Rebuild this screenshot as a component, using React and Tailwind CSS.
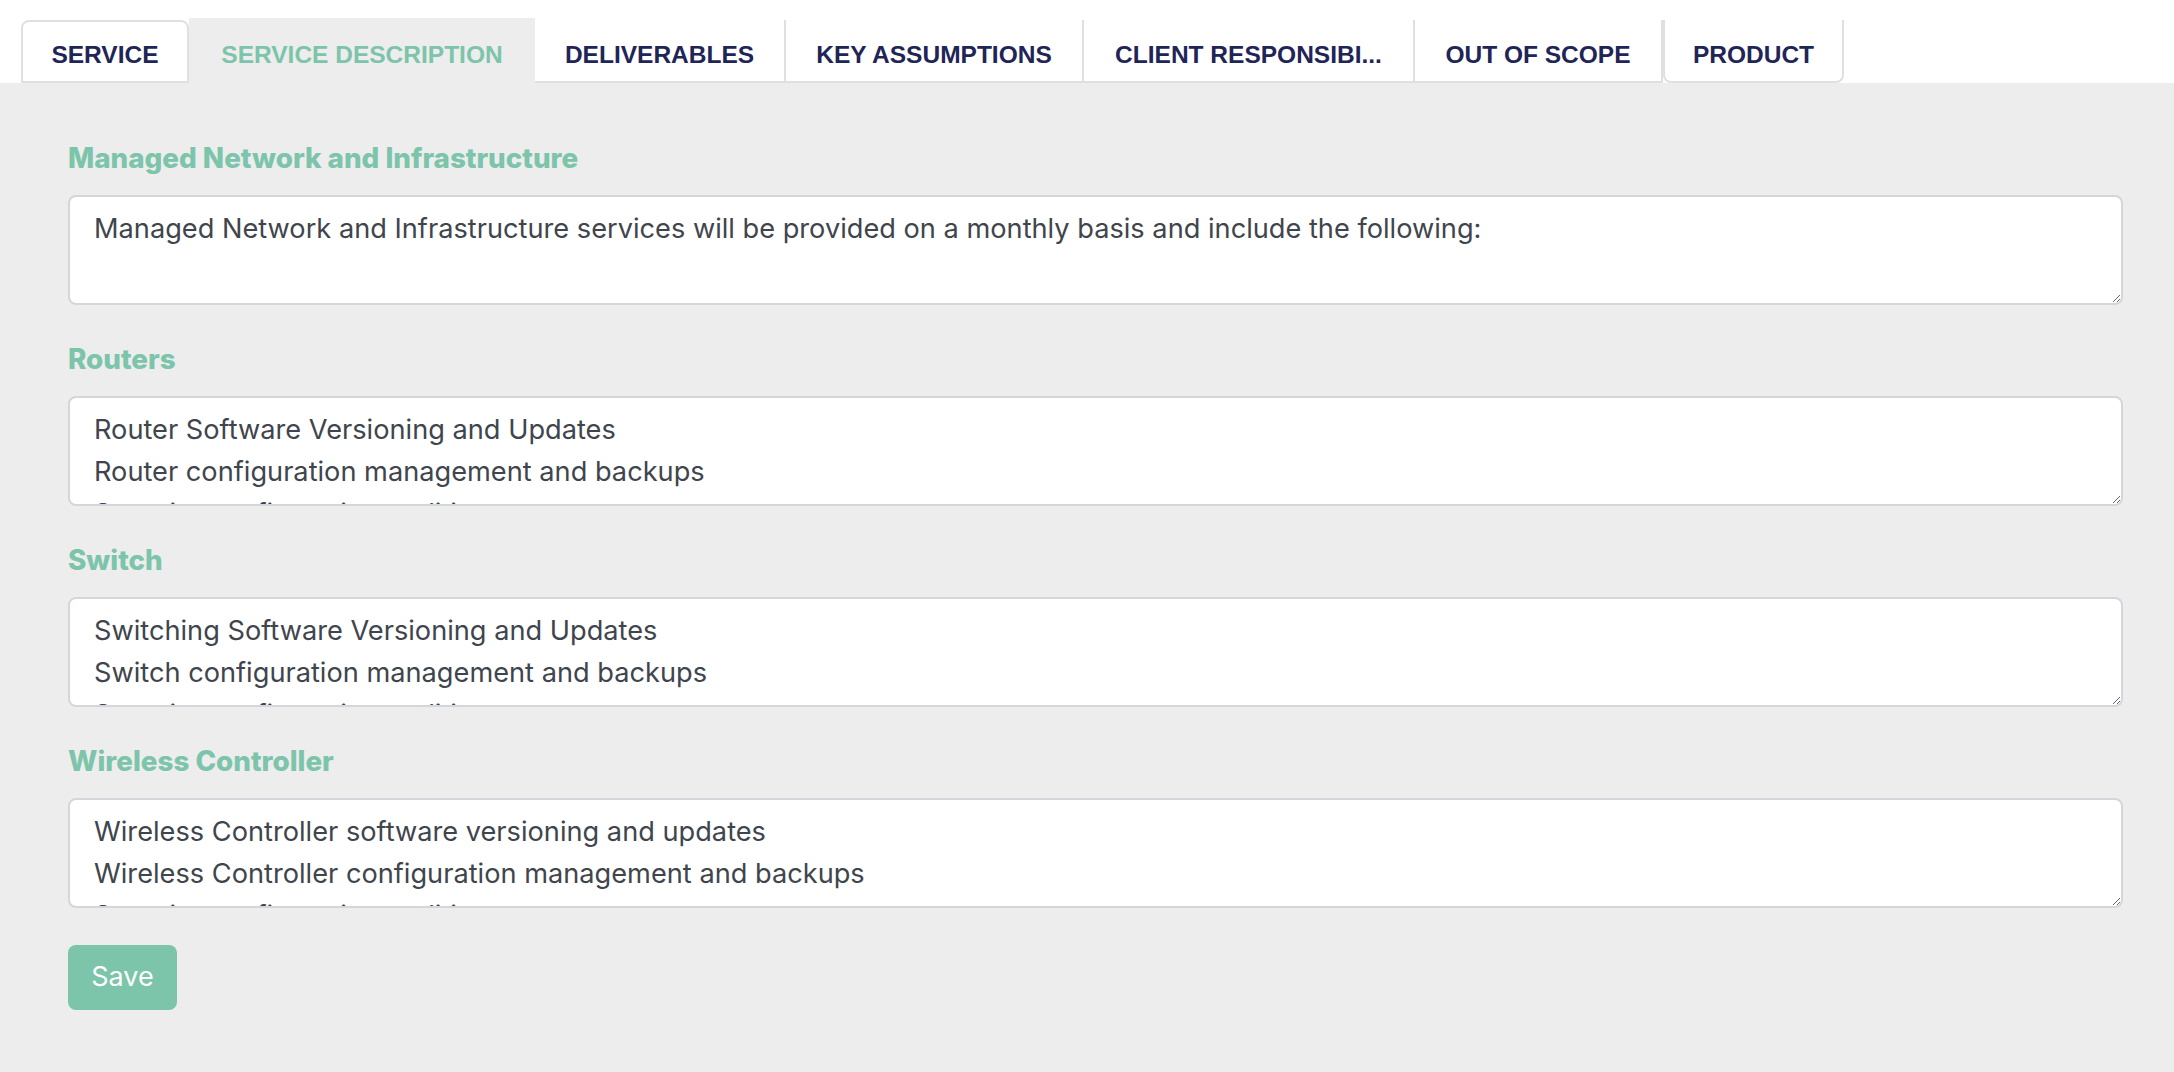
import React from "react";

const tabs = [
  { label: "SERVICE", kind: "first", w: "w-[168px]" },
  { label: "SERVICE DESCRIPTION", kind: "active", w: "w-[346px]" },
  { label: "DELIVERABLES", kind: "mid", w: "w-[251px]" },
  { label: "KEY ASSUMPTIONS", kind: "mid", w: "w-[298px]" },
  { label: "CLIENT RESPONSIBI...", kind: "mid", w: "w-[331px]" },
  { label: "OUT OF SCOPE", kind: "mid", w: "w-[248px]" },
  { label: "PRODUCT", kind: "last", w: "w-[181px]" },
];

const sections = [
  {
    title: "Managed Network and Infrastructure",
    text: "Managed Network and Infrastructure services will be provided on a monthly basis and include the following:",
  },
  {
    title: "Routers",
    text: "Router Software Versioning and Updates\nRouter configuration management and backups\nSecurity configuration auditing\nPerformance monitoring",
  },
  {
    title: "Switch",
    text: "Switching Software Versioning and Updates\nSwitch configuration management and backups\nSecurity configuration auditing\nPerformance monitoring",
  },
  {
    title: "Wireless Controller",
    text: "Wireless Controller software versioning and updates\nWireless Controller configuration management and backups\nSecurity configuration auditing\nPerformance monitoring",
  },
];

function Tab({ label, kind, w }) {
  const base = `${w} box-border shrink-0 whitespace-nowrap text-center text-[24.5px] leading-[28px] font-bold uppercase`;
  if (kind === "active") {
    return (
      <div className={`${base} h-[65px] pt-[23px] bg-[#ededed] text-[#7cc4aa]`}>
        {label}
      </div>
    );
  }
  if (kind === "first") {
    return (
      <div
        className={`${base} h-[63px] pt-[19px] bg-white text-[#1f2556] border-2 border-[#e0e0e0] rounded-t-[8px]`}
      >
        {label}
      </div>
    );
  }
  if (kind === "last") {
    return (
      <div
        className={`${base} h-[63px] pt-[21px] bg-white text-[#1f2556] border-x-2 border-b-2 border-[#e0e0e0] rounded-b-[8px]`}
      >
        {label}
      </div>
    );
  }
  return (
    <div
      className={`${base} h-[63px] pt-[21px] bg-white text-[#1f2556] border-r-2 border-b-2 border-[#e0e0e0]`}
    >
      {label}
    </div>
  );
}

export default function App() {
  return (
    <div className="min-h-screen w-full bg-[#ededed] [font-family:'Inter','Lato',sans-serif]">
      <div className="flex items-end bg-white pl-[21px] pt-[18px] [font-family:'Liberation_Sans',Arial,sans-serif]">
        {tabs.map((t) => (
          <Tab key={t.label} {...t} />
        ))}
      </div>
      <div className="pl-[68px] pr-[51px] pt-[59px] pb-[40px]">
        {sections.map((s) => (
          <div key={s.title} className="mb-[38px]">
            <div className="mb-[21px] text-[27.8px] leading-[32px] font-extrabold text-[#7cc4aa]">
              {s.title}
            </div>
            <textarea
              className="block box-border h-[110px] w-full overflow-hidden rounded-[8px] border-2 border-[#d3d6da] bg-white pl-[24px] pr-[20px] pt-[11px] text-[27.2px] leading-[42px] text-[#3f454d] outline-none [font-family:'Inter','Lato',sans-serif]"
              defaultValue={s.text}
            />
          </div>
        ))}
        <button className="-mt-[1px] h-[65px] w-[109px] rounded-[8px] bg-[#7cc4aa] text-[27px] text-white">
          Save
        </button>
      </div>
    </div>
  );
}
